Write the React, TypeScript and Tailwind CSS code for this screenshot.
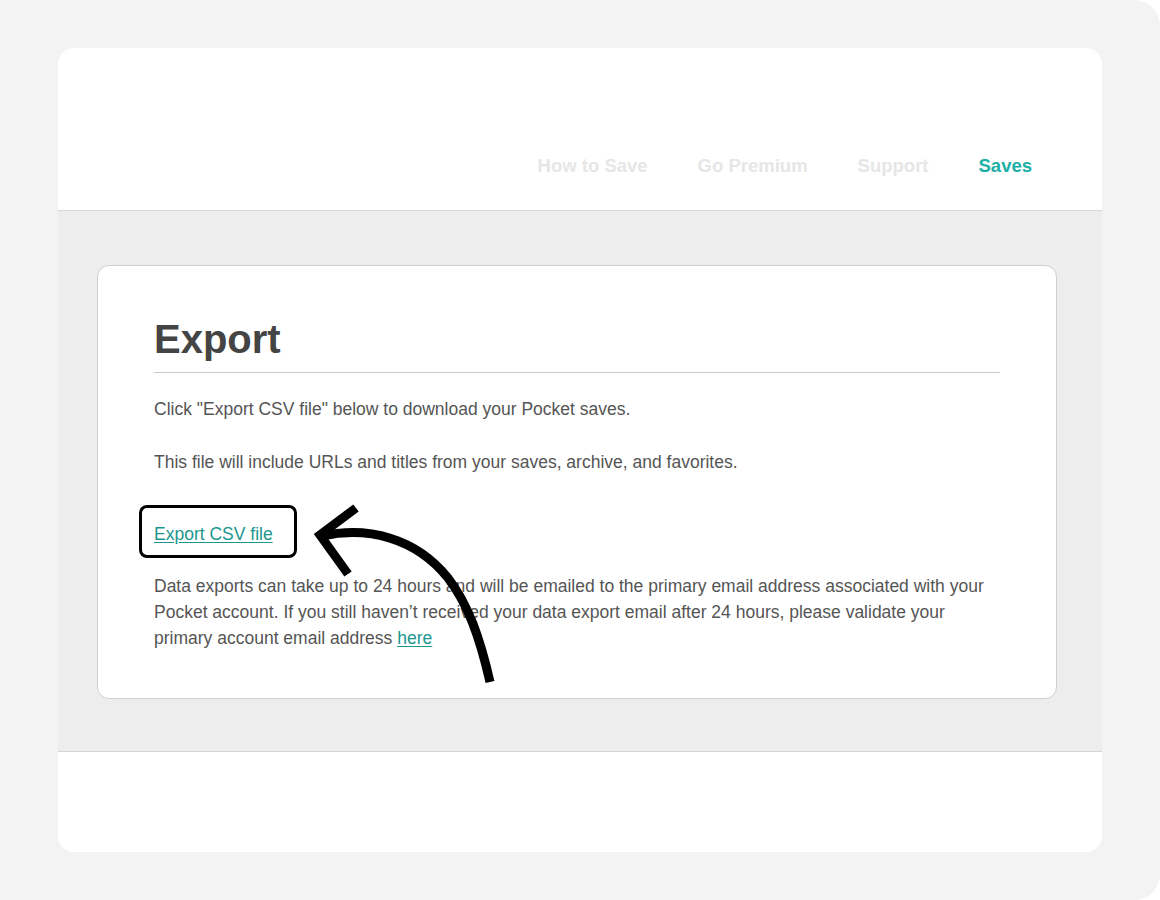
export default function App() {
  return (
    <div className="w-[1160px] h-[900px] bg-white" style={{ fontFamily: '"Liberation Sans", Arial, sans-serif' }}>
      <div className="w-full h-full bg-[#f3f3f3] rounded-r-[26px] pt-[48px] pl-[58px] pr-[58px]">
        <div className="relative w-[1044px] h-[804px] bg-white rounded-[16px] overflow-hidden flex flex-col">
          {/* Header */}
          <header className="h-[163px] flex items-start justify-end pr-[70px] pt-[107px] border-b border-[#d6d6d6] shadow-[0_1px_2px_rgba(0,0,0,0.08)]">
            <nav className="flex items-center gap-[50px] text-[18.5px] leading-[22px] font-bold">
              <a className="text-[#e6e6e6]">How to Save</a>
              <a className="text-[#e6e6e6]">Go Premium</a>
              <a className="text-[#e6e6e6]">Support</a>
              <a className="text-[#1cb0a7]">Saves</a>
            </nav>
          </header>

          {/* Main */}
          <main className="h-[541px] bg-[#ededed] border-b border-[#d4d4d4] pl-[39px] pt-[54px]">
            <div className="w-[960px] bg-white border border-[#cfcfcf] rounded-[12px] h-[434px] px-[56px] pt-[50px]">
              <h1 className="text-[40px] leading-[46px] font-bold text-[#444444] pb-[10px] border-b border-[#cccccc]">Export</h1>
              <div className="text-[17.5px] text-[#555555]">
                <p className="mt-[23px] leading-[26px]">Click "Export CSV file" below to download your Pocket saves.</p>
                <p className="mt-[27px] leading-[26px]">This file will include URLs and titles from your saves, archive, and favorites.</p>
                <div className="mt-[46px] leading-[26px]">
                  <a className="text-[#1a978f] underline underline-offset-2">Export CSV file</a>
                </div>
                <p className="mt-[26px] leading-[26px]">
                  Data exports can take up to 24 hours and will be emailed to the primary email address associated with your Pocket account. If you still haven’t received your data export email after 24 hours, please validate your primary account email address{" "}
                  <a className="text-[#1a978f] underline underline-offset-2">here</a>
                </p>
              </div>
            </div>
          </main>

          <footer className="flex-1 bg-white" />

          {/* Annotation: highlight box and hand-drawn arrow */}
          <div className="absolute left-[81px] top-[457px] w-[158px] h-[53px] border-[3px] border-black rounded-[8px]" />
          <svg className="absolute left-[250px] top-[450px]" width="200" height="190" viewBox="0 0 200 190" fill="none">
            <path d="M14 38 C60 28 108 40 140 80 C160 106 172 140 182 184" stroke="black" strokeWidth="9" strokeLinecap="butt" />
            <path d="M48 10 L12 37 L40 76" stroke="black" strokeWidth="9" strokeLinejoin="miter" strokeLinecap="butt" />
          </svg>
        </div>
      </div>
    </div>
  )
}
